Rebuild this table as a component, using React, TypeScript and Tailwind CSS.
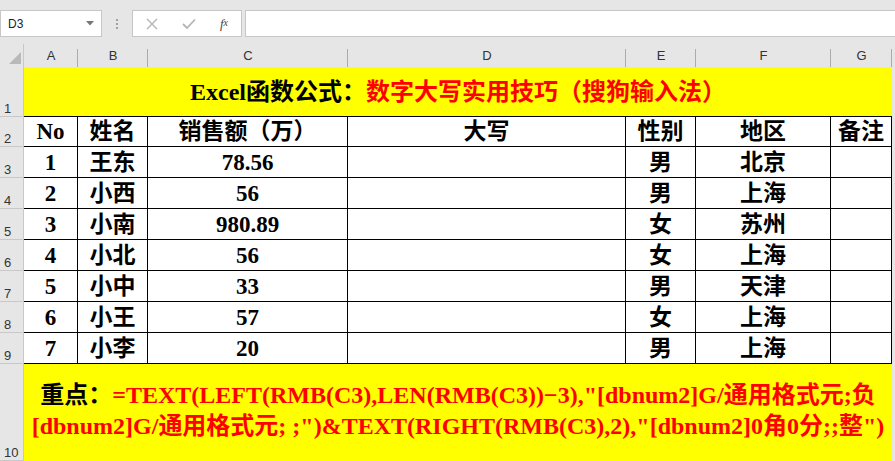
import React from "react";

const cols = [54, 70, 200, 278, 70, 135, 61];
const letters = ["A", "B", "C", "D", "E", "F", "G"];

const rows = [
  ["1", "王东", "78.56", "", "男", "北京", ""],
  ["2", "小西", "56", "", "男", "上海", ""],
  ["3", "小南", "980.89", "", "女", "苏州", ""],
  ["4", "小北", "56", "", "女", "上海", ""],
  ["5", "小中", "33", "", "男", "天津", ""],
  ["6", "小王", "57", "", "女", "上海", ""],
  ["7", "小李", "20", "", "男", "上海", ""],
];

const head = ["No", "姓名", "销售额（万）", "大写", "性别", "地区", "备注"];

const serif = "font-['Liberation_Serif','Noto_Sans_CJK_SC',serif]";

function RowHead({ n, h }: { n: string; h: number }) {
  return (
    <div
      className="w-[24px] shrink-0 bg-[#e6e6e6] border-r border-b border-[#c8c8c8] flex items-end pl-[4px] pb-[1px] text-[13px] leading-none text-[#333] font-['Liberation_Sans',sans-serif]"
      style={{ height: h }}
    >
      {n}
    </div>
  );
}

function DataRow({ cells, h, n }: { cells: string[]; h: number; n: string }) {
  return (
    <div className="flex">
      <RowHead n={n} h={h} />
      {cells.map((c, i) => (
        <div
          key={i}
          className={`shrink-0 bg-white border-r border-b border-black flex items-center justify-center font-bold text-black text-[23px] leading-none ${serif}`}
          style={{ width: cols[i], height: h }}
        >
          {c}
        </div>
      ))}
    </div>
  );
}

export default function App() {
  return (
    <div className="w-[895px] h-[461px] overflow-hidden bg-[#e6e6e6] font-['Liberation_Sans',sans-serif]">
      {/* formula bar */}
      <div className="h-[44px] flex items-start pt-[10px]">
        <div className="w-[102px] h-[27px] bg-white border border-[#c6c6c6] flex items-center justify-between pl-[7px] pr-[7px] text-[12px] text-[#222]">
          <span>D3</span>
          <svg width="8" height="5" viewBox="0 0 8 5">
            <path d="M0 0 L8 0 L4 4.5 Z" fill="#777" />
          </svg>
        </div>
        <div className="w-[30px] h-[27px] flex flex-col items-center justify-center gap-[2px]">
          <span className="w-[2px] h-[2px] bg-[#a0a0a0]" />
          <span className="w-[2px] h-[2px] bg-[#a0a0a0]" />
          <span className="w-[2px] h-[2px] bg-[#a0a0a0]" />
        </div>
        <div className="w-[110px] h-[27px] bg-white border border-[#c6c6c6] flex items-center">
          <div className="w-[38px] flex justify-center">
            <svg width="12" height="12" viewBox="0 0 12 12">
              <path d="M1 1 L11 11 M11 1 L1 11" stroke="#b4b4b4" strokeWidth="1.4" />
            </svg>
          </div>
          <div className="w-[36px] flex justify-center">
            <svg width="14" height="12" viewBox="0 0 14 12">
              <path d="M1 6 L5 10 L13 1.5" stroke="#b4b4b4" strokeWidth="1.8" fill="none" />
            </svg>
          </div>
          <div className="w-[34px] flex justify-center text-[13px] italic text-[#444] font-['Liberation_Serif',serif]">
            f<span className="text-[10px] relative top-[1px]">x</span>
          </div>
        </div>
        <div className="ml-[3px] flex-1 h-[27px] bg-white border-y border-l border-[#c6c6c6]" />
      </div>

      {/* column headers */}
      <div className="flex h-[23px]">
        <div className="w-[24px] h-[23px] shrink-0 border-r border-[#c8c8c8] flex items-end justify-end pr-[2px] pb-[3px]">
          <svg width="12" height="12" viewBox="0 0 12 12">
            <path d="M12 0 L12 12 L0 12 Z" fill="#b9b9b9" />
          </svg>
        </div>
        {letters.map((l, i) => (
          <div
            key={l}
            className="shrink-0 h-[23px] flex items-end justify-center pb-[2px] text-[13px] text-[#333] relative"
            style={{ width: cols[i] }}
          >
            {l}
            <span className="absolute right-0 bottom-0 w-px h-[18px] bg-[#ababab]" />
          </div>
        ))}
      </div>

      {/* row 1 title */}
      <div className="flex">
        <RowHead n="1" h={50} />
        <div
          className={`w-[868px] h-[50px] bg-[#ffff00] border-b border-black flex items-center justify-center font-bold text-[24px] ${serif}`}
        >
          <span className="text-black">Excel函数公式：</span>
          <span className="text-[#ff0000]">数字大写实用技巧（搜狗输入法）</span>
        </div>
      </div>

      <DataRow cells={head} h={30} n="2" />
      {rows.map((r, i) => (
        <DataRow key={i} cells={r} h={31} n={String(i + 3)} />
      ))}

      {/* row 10 */}
      <div className="flex">
        <RowHead n="10" h={97} />
        <div
          className={`w-[868px] h-[97px] bg-[#ffff00] flex flex-col items-center justify-center font-bold text-[24px] leading-[31px] text-[#ff0000] pb-[4px] ${serif}`}
        >
          <div className="whitespace-nowrap">
            <span className="text-black">重点：</span>=TEXT(LEFT(RMB(C3),LEN(RMB(C3))−3),"[dbnum2]G/通用格式元;负
          </div>
          <div className="whitespace-nowrap">
            [dbnum2]G/通用格式元; ;")&amp;TEXT(RIGHT(RMB(C3),2),"[dbnum2]0角0分;;整")
          </div>
        </div>
      </div>
    </div>
  );
}
